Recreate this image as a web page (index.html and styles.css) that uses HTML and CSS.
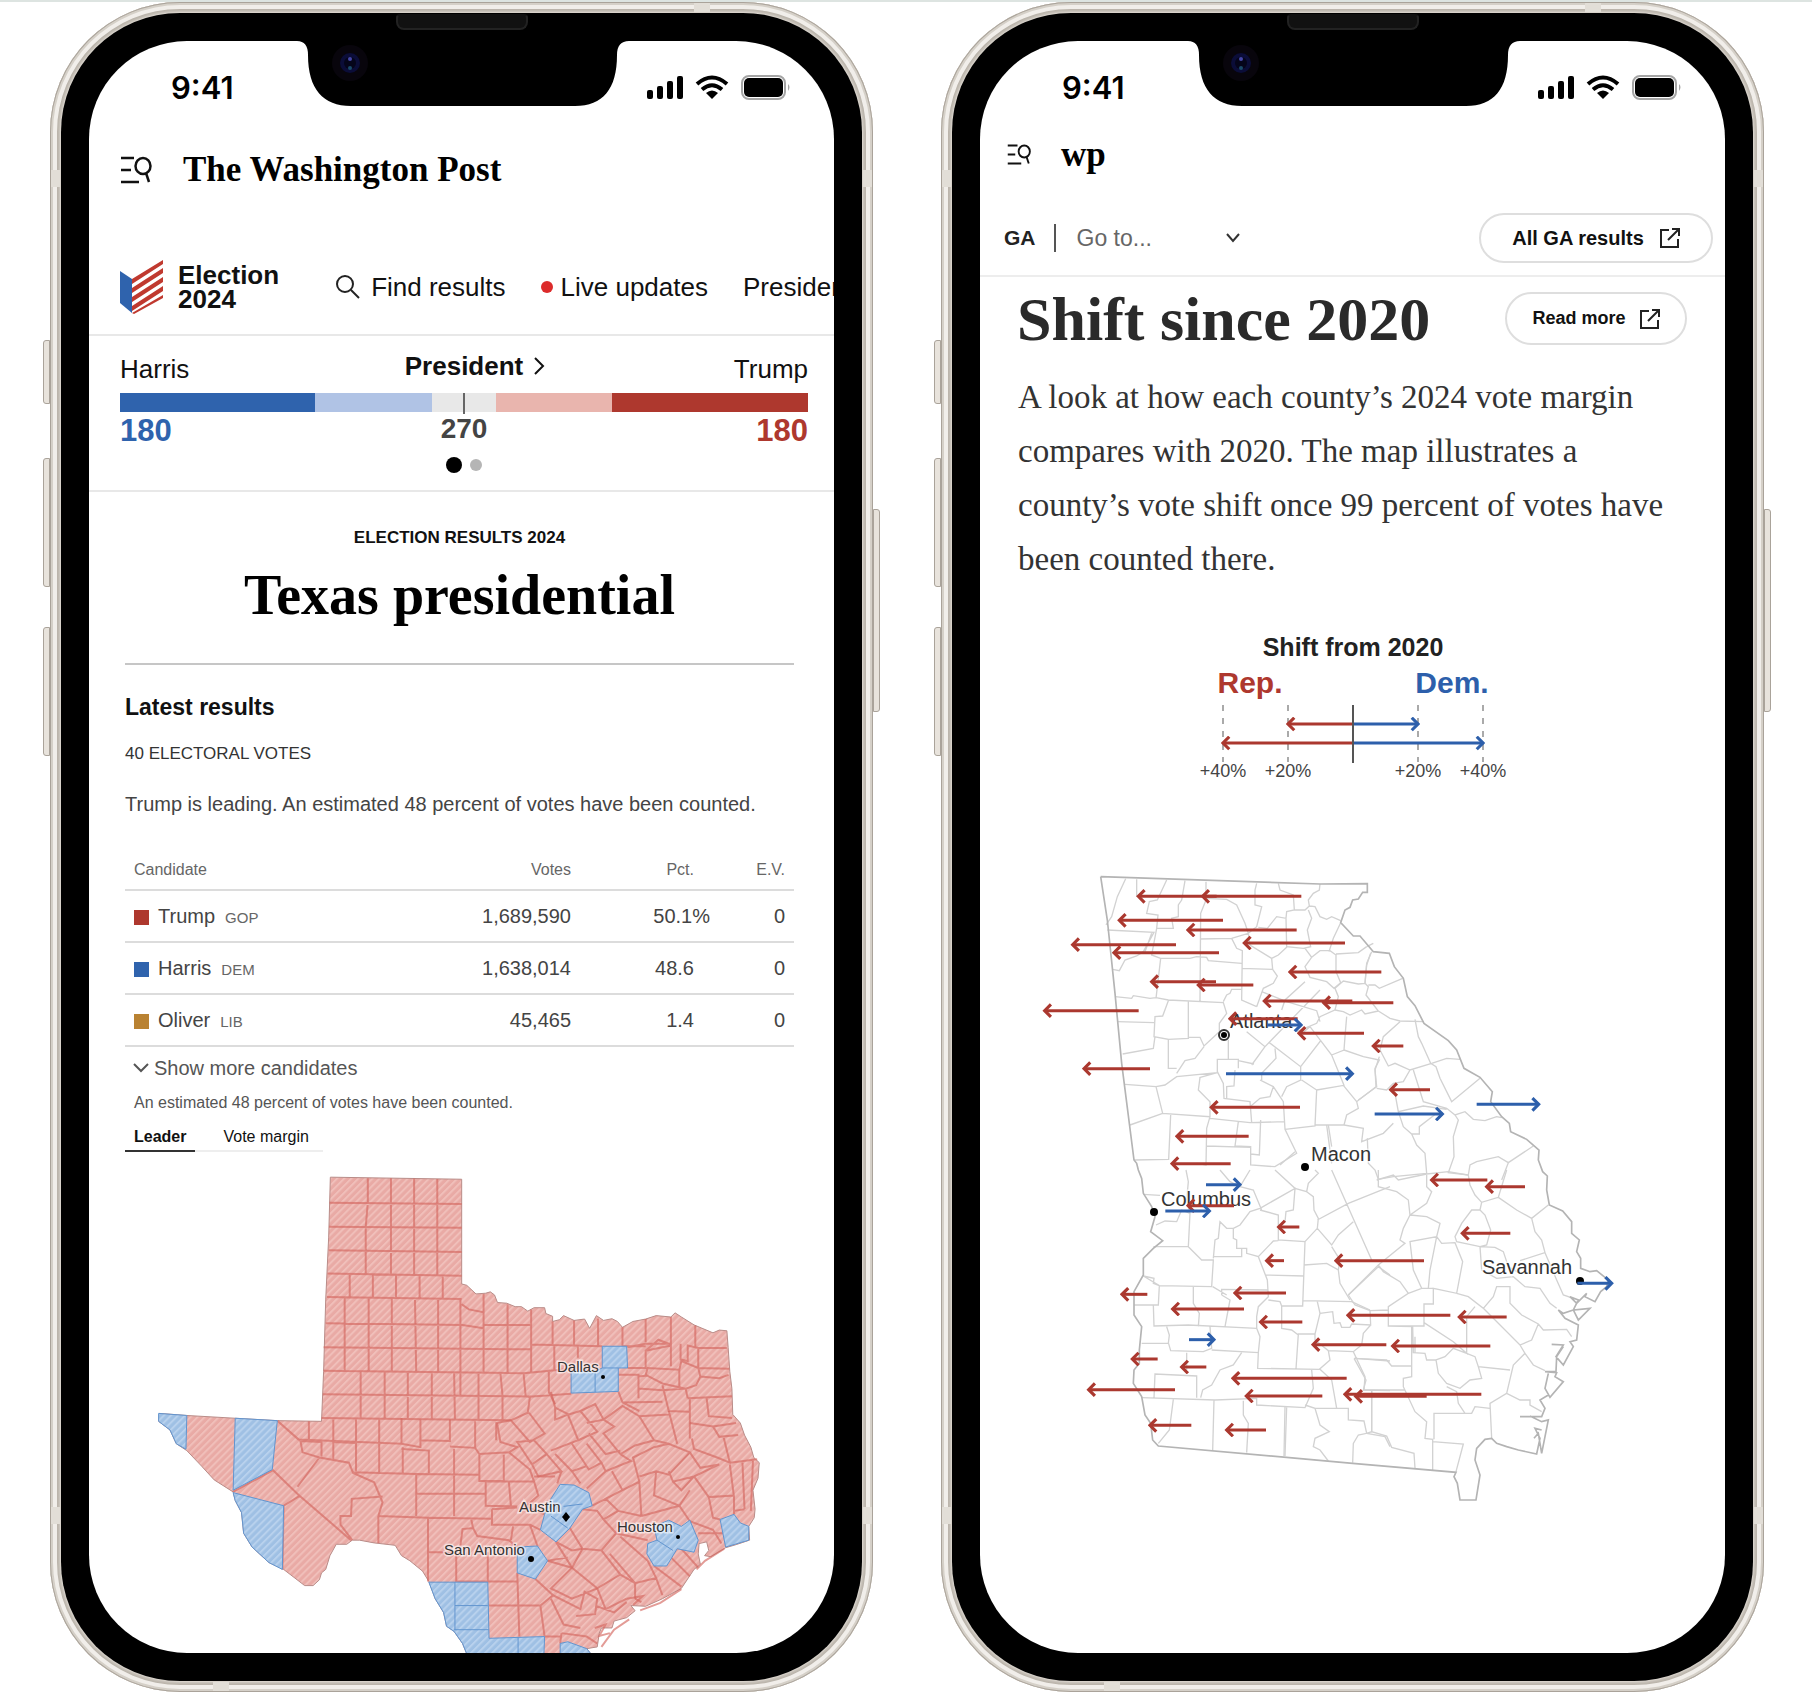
FILE: index.html
```html
<!DOCTYPE html>
<html lang="en">
<head>
<meta charset="utf-8">
<meta name="viewport" content="width=device-width, initial-scale=1">
<title>Election 2024 on mobile</title>
<link rel="stylesheet" href="styles.css">
</head>
<body>
<svg class="defs" aria-hidden="true">
  <defs>
    <symbol id="notch" viewBox="0 0 332 66">
      <path d="M0 0Q11 0 11 14C11 48 26 65 54 65H278C306 65 320 48 320 14Q320 0 332 0Z" fill="#000"/>
      <circle cx="53" cy="22" r="18" fill="#08050c"/>
      <circle cx="53" cy="22" r="10" fill="#0b0d38"/>
      <circle cx="53" cy="22" r="6" fill="#05051a"/>
      <circle cx="53" cy="18" r="2" fill="#4547a8"/>
      <circle cx="53" cy="27" r="2" fill="#1a4a68"/>
    </symbol>
    <symbol id="status" viewBox="0 0 144 26">
      <rect x="0" y="15" width="6" height="9" rx="2"/>
      <rect x="10" y="11" width="6" height="13" rx="2"/>
      <rect x="20" y="6" width="6" height="18" rx="2"/>
      <rect x="30" y="1" width="6" height="23" rx="2"/>
      <path d="M50 9Q65-4 80 9M55 14.500Q65 6 75 14.500" fill="none" stroke="#000" stroke-width="4"/>
      <path d="M59 18Q65 13 71 18L65 24Z"/>
      <rect x="95" y="1" width="43" height="23" rx="7" fill="none" stroke="#a5a5a5" stroke-width="2"/>
      <rect x="97" y="3" width="39" height="19" rx="5"/>
      <path d="M141 9q3 3 0 7z" fill="#a5a5a5"/>
    </symbol>
    <symbol id="menu" viewBox="0 0 32 28">
      <g fill="none" stroke="#111" stroke-width="2.500">
        <path d="M1 2H14M1 14H11M1 26H19"/>
        <ellipse cx="23" cy="10" rx="7.500" ry="8"/>
        <path d="M26 17L29 26"/>
      </g>
    </symbol>
    <symbol id="external" viewBox="0 0 20 20">
      <path d="M9 2H1V19H18V11M12 1H19V8M19 1L8 12" fill="none" stroke="#222" stroke-width="2"/>
    </symbol>
    <pattern id="hatch-red" width="5" height="5" patternUnits="userSpaceOnUse" patternTransform="scale(2.376 2.904) rotate(45)">
      <rect width="5" height="5" fill="#e9aaa5"/><rect width="2" height="5" fill="#f0bfba"/>
    </pattern>
    <pattern id="hatch-blue" width="5" height="5" patternUnits="userSpaceOnUse" patternTransform="scale(2.376 2.904) rotate(45)">
      <rect width="5" height="5" fill="#9fc0e4"/><rect width="2" height="5" fill="#b8d1ed"/>
    </pattern>
    <marker id="head-red" viewBox="0 0 8 12" refX="7" refY="6" markerWidth="4" markerHeight="5" orient="auto">
      <path d="M2 1L7 6L2 11" fill="none" stroke="#ab382f" stroke-width="2.500"/>
    </marker>
    <marker id="head-blue" viewBox="0 0 8 12" refX="7" refY="6" markerWidth="4" markerHeight="5" orient="auto">
      <path d="M2 1L7 6L2 11" fill="none" stroke="#2d5fab" stroke-width="2.500"/>
    </marker>
  </defs>
</svg>

<div class="stage">
  <section class="phone" aria-label="Texas results">
    <span class="key key-mute"></span><span class="key key-up"></span><span class="key key-down"></span><span class="key key-power"></span>
    <div class="bezel">
      <span class="band band-left"></span><span class="band band-right"></span><span class="band band-top"></span><span class="band band-bottom"></span><span class="band band-left low"></span><span class="band band-right low"></span>
      <span class="speaker"></span>
      <div class="screen">
        <svg class="notch" aria-hidden="true"><use href="#notch"/></svg>
        <div class="status"><span>9:41</span><svg class="status-icons" aria-hidden="true"><use href="#status"/></svg></div>
        <header class="masthead">
          <button class="icon-button" aria-label="Menu and search"><svg width="32" height="28"><use href="#menu"/></svg></button>
          <a class="wordmark" href="#home">The Washington Post</a>
        </header>
        <nav class="election-nav">
          <a class="brand" href="#election">
            <svg width="44" height="54" viewBox="0 0 44 54" aria-hidden="true">
              <path d="M0 11L12 19V53L0 43Z" fill="#2f63ad"/>
              <path d="M12 19L43 0V4L12 24ZM12 28L43 8V13L12 33ZM12 37L43 17V22L12 42ZM12 46L43 26V31L12 51ZM12 53L43 35V38L14 54Z" fill="#c0392f"/>
            </svg>
            <span>Election<br>2024</span>
          </a>
          <a class="nav-link find" href="#find">
            <svg width="25" height="25" viewBox="0 0 25 25" aria-hidden="true"><circle cx="10" cy="10" r="8" fill="none" stroke="#222" stroke-width="2"/><path d="M16 16L24 24" stroke="#222" stroke-width="2"/></svg>
            Find results</a>
          <a class="nav-link live" href="#live"><span class="live-dot"></span>Live updates</a>
          <a class="nav-link" href="#president">President</a>
        </nav>
        <section class="scoreboard">
          <div class="score-names">
            <span>Harris</span>
            <a class="race" href="#race">President<svg width="11" height="18" viewBox="0 0 11 18" aria-hidden="true"><path d="M1 1L9 9L1 17" fill="none" stroke="#111" stroke-width="2"/></svg></a>
            <span class="right">Trump</span>
          </div>
          <div class="score-bar">
            <span class="dem" style="flex-grow:195"></span><span class="dem-lean" style="flex-grow:117"></span><span class="open" style="flex-grow:64"></span><span class="gop-lean" style="flex-grow:116"></span><span class="gop" style="flex-grow:196"></span>
          </div>
          <div class="score-totals"><b class="dem-text">180</b><b class="goal">270</b><b class="gop-text right">180</b></div>
          <div class="pager"><span class="dot current"></span><span class="dot"></span></div>
        </section>
        <main class="results">
          <p class="eyebrow">ELECTION RESULTS 2024</p>
          <h1>Texas presidential</h1>
          <hr>
          <h2>Latest results</h2>
          <p class="electoral">40 ELECTORAL VOTES</p>
          <p class="summary">Trump is leading. An estimated 48 percent of votes have been counted.</p>
          <table>
            <thead><tr><th>Candidate</th><th class="num">Votes</th><th class="num pct">Pct.</th><th class="num ev">E.V.</th></tr></thead>
            <tbody>
              <tr><td><i class="swatch gop"></i>Trump<small>GOP</small></td><td class="num">1,689,590</td><td class="num pct lead">50.1%</td><td class="num ev">0</td></tr>
              <tr><td><i class="swatch dem"></i>Harris<small>DEM</small></td><td class="num">1,638,014</td><td class="num pct">48.6</td><td class="num ev">0</td></tr>
              <tr><td><i class="swatch lib"></i>Oliver<small>LIB</small></td><td class="num">45,465</td><td class="num pct">1.4</td><td class="num ev">0</td></tr>
            </tbody>
          </table>
          <button class="more"><svg width="16" height="10" viewBox="0 0 16 10" aria-hidden="true"><path d="M1 1L8 8L15 1" fill="none" stroke="#555" stroke-width="2"/></svg>Show more candidates</button>
          <p class="note">An estimated 48 percent of votes have been counted.</p>
          <div class="tabs"><button class="tab selected">Leader</button><button class="tab">Vote margin</button></div>
          <svg class="texas" viewBox="-5 1 669 512" role="img" aria-label="Map of Texas counties">
            <g transform="scale(.42092 .34438)">
              <path class="red-area" d="M476 76L788 82V386L800 390L822 415L845 413L856 409L866 418L873 440L895 442L915 452L930 452L945 465L960 455L985 455L988 472L1004 480V495L1020 490L1030 478L1055 492L1080 488L1092 515L1108 478L1125 492L1145 487L1158 495L1170 512L1195 495L1225 488L1250 478L1285 482L1295 470L1310 482L1340 505L1385 528L1400 520L1418 522L1421 570L1425 640L1430 690L1432 765L1450 790L1460 825L1475 860L1482 890L1495 905L1492 950L1480 985L1485 1040L1483 1065L1470 1090L1472 1130L1440 1143L1415 1152L1380 1178L1365 1175L1375 1160L1370 1135L1352 1140L1350 1170L1355 1200L1340 1215L1310 1270L1265 1300L1225 1322L1190 1320L1200 1335L1180 1355L1150 1365L1145 1385L1120 1385L1115 1400L1110 1440L1085 1445L1105 1475H805L790 1430L770 1395L752 1380L745 1340L725 1300L710 1250L695 1220L665 1190L645 1175L630 1145L580 1138L545 1130H528L515 1142H490L475 1175L465 1215L455 1225L450 1245L435 1262H415L365 1215L330 1195L290 1150L270 1110L265 1050L250 1015L245 990L200 955L170 915L135 870L110 850L95 810L68 785L70 762L135 768L350 783L455 785L460 640L465 430L472 250Z"/>
              <path class="red-line" d="M474 150L788 154M473 220L788 223M472 288L788 293M469 356L788 362M468 424L788 430M465 500L790 505L840 515M460 570L953 576M460 638L935 645L1048 632M458 706L955 713L1048 705M455 775L905 782M565 79V150L560 220V356M620 79V356M675 80V358M730 81V360M522 358V424M577 360V426M632 362V426M688 362V427M743 362V429M510 426V638M567 428V640M622 428V640M677 428L680 643M732 430V643M785 430V710M840 415V643M897 445V643M953 460V643M840 505H953M788 445L805 460L840 468M548 640V777M605 642V778M660 642V778M717 642V780M770 644L772 780M828 645V780M880 645L885 710V780M935 645L940 712L950 715L945 760L905 782M1004 495V565M1055 492V565M1112 487V567M1170 512V567H1225M1225 488V555M1285 482V560M1343 507V570M955 562L1122 567M1008 565V635M1064 567V600M995 635V700L1010 735M1182 570L1225 560L1285 560M1182 630H1225L1225 580L1255 548L1285 562V625M1225 580L1285 565M1308 560V605L1325 610V565L1350 572L1418 572M1350 572V630L1355 655L1345 680L1320 690L1265 675L1225 650L1230 630L1305 635L1310 610L1350 630L1424 632M1305 635V685M1160 650H1208V718M1208 655L1230 652M1208 690L1265 695L1320 690L1325 718M1265 680L1280 755L1328 757M1160 698L1170 730L1210 755M1325 718L1430 712M1330 718V835M1370 718L1375 770L1430 775M1170 730L1265 728M1355 655L1400 660L1422 650"/>
              <path class="red-line" d="M905 782L950 845L985 820L948 760M905 782L870 790V840M1010 745L1042 765L1010 780ZM1000 700L1010 745M1040 765L1065 840L1000 870M1042 765L1070 755L1110 815L1065 840M1070 755L1105 735L1125 780L1085 790M1125 780L1170 740L1210 770L1245 840L1200 855L1165 880L1125 820L1150 800L1125 780M1050 850L1090 925L1120 905L1085 850M1090 820L1130 880L1165 870M920 845L955 910L990 880L960 840ZM955 910L970 945L1025 930L990 880M1025 930L1015 965M1010 880L1050 930L1085 915M1050 930L1070 965M1120 905L1130 930L1190 900L1165 880M1130 930L1085 980M1145 930L1170 985L1210 960L1195 890L1245 860L1280 850L1330 875L1280 940L1250 930L1210 945M1210 770L1280 765M1280 755L1300 850M1245 840L1280 850M1330 790L1385 800L1400 830L1445 825M1335 835L1340 865L1395 890L1425 905L1410 830M1385 800L1440 790M1425 905L1490 895M1330 875L1355 920L1400 910M1455 905L1460 1040M1480 900L1475 1045M1425 910L1435 1005M1400 910L1340 945L1290 960L1280 930M1340 945L1375 1005L1435 1000M1340 945L1310 985L1290 960M1210 960L1215 1060M1250 930L1245 1000L1305 1030L1330 985M1215 1060L1305 1030L1330 1075M1170 985L1130 1010L1160 1045L1215 1060M1130 1010L1098 1030M1160 1045L1125 1070L1110 1045L1075 1040M1125 1070L1155 1110L1230 1130M1155 1110L1120 1160L1075 1155L1045 1095M1075 1155L1050 1210L992 1190M1120 1160L1165 1230L1110 1270L1050 1210M1165 1120L1230 1190L1250 1240L1200 1255L1140 1170M1200 1255V1300M1165 1230L1200 1255M1250 1240L1265 1290M1245 1205L1310 1265M1285 1180L1330 1235M1310 1155L1350 1210M1375 1005L1385 1065L1402 1070M1435 1005V1055M1330 1075L1385 1100L1405 1140M1350 1110H1410M1460 1040L1435 1045"/>
              <path class="red-line" d="M350 783L405 842L410 875L450 890L520 905L530 935L580 962L600 1020L590 1060M405 842L455 845V887M450 890L398 975M338 925L400 998L525 1130M405 1000L365 1030L362 1215M245 990L338 928M350 783L400 838L645 850V775M425 785V838M483 780V895M537 780V930M592 780V935M485 845L537 848M645 850L690 860V840L760 842V780M648 860V935M690 780V840M645 865L710 870V935M770 865V1060M530 933L680 938L830 940M760 858L820 862L830 880L900 875L950 925L960 960H845V1030L920 1032M820 785V862M872 790L880 845L920 860L900 875M830 880V958H888V882M680 938V1060M680 995H845M900 960L905 1030M500 1085V1060H525L527 1010L600 1003M500 1085L528 1130M590 1060V1138M590 1060L708 1065L860 1068M708 1065V1250M708 1165H775V1250H920M785 1145L790 1098L815 1095L825 1118L900 1130L920 1150M810 1065L815 1095M860 1040V1085H950L968 1147M910 1090L905 1130M850 1165V1250M960 960L970 1000L940 1032L985 1055M860 1040L920 1035M950 1085L975 1100M960 945H1010M920 1225L925 1410M853 1320H975L1005 1290L963 1243M975 1320L985 1410M1012 1135L1050 1210L1000 1270L1050 1300L1110 1270M1000 1300L1030 1375L1070 1385M1005 1290L1070 1330L1080 1280L1110 1300L1105 1345L1060 1350M1105 1320L1150 1340L1180 1310M1025 1400L1085 1410L1110 1430M1025 1400L1022 1430M985 1410H1022M1012 1135L1050 1160L1075 1155M992 1190L1040 1180M1110 1270L1130 1330L1180 1300M1200 1300L1215 1310"/>
              <path class="red-line coast" d="M1212 1334L1260 1312L1310 1272M1120 1440L1150 1390L1186 1360M1104 1385L1130 1375L1115 1408L1140 1400M1180 1300L1218 1292L1195 1318M1346 1215L1366 1190L1412 1155"/>
              <path class="blue-area" d="M68 762L135 768L133 866L110 850L95 810L68 785ZM250 776L350 783L338 925L245 985ZM245 992L365 1030L362 1215L330 1195L290 1150L270 1110L265 1050L250 1015ZM1122 567H1180L1182 630H1160V698L1048 703V640H1105L1122 630ZM1105 640V700M1122 630H1160M1022 968L1055 970L1090 992L1098 1030L1075 1040L1045 1095L1012 1135L975 1100L985 1055L1000 1010ZM1000 1060L1040 1095M1030 1032L1075 1025M920 1150L968 1147L992 1190L963 1243L920 1225ZM1245 1090L1280 1072L1310 1090L1330 1072L1350 1130L1340 1165L1300 1155L1275 1205H1245L1228 1170L1230 1140L1252 1130ZM1252 1130L1290 1160M1402 1070L1435 1055L1450 1080L1470 1090V1130L1415 1150ZM710 1252H850L853 1415L985 1410L983 1475H805L790 1430L770 1395L752 1380L745 1340L725 1300ZM772 1252V1390M772 1320H850M770 1390H852M922 1412V1475M1022 1430L1040 1425L1085 1445L1105 1475H1022Z"/>
            </g>
            <g class="city"><text x="427" y="221">Dallas</text><text x="389" y="361">Austin</text><text x="314" y="404">San Antonio</text><text x="487" y="381">Houston</text></g>
            <circle cx="473" cy="226" r="2"/><path d="M436 361L440 366L436 371L432 366Z"/><circle cx="401" cy="408" r="3"/><circle cx="548" cy="386" r="2"/>
          </svg>
        </main>
      </div>
    </div>
  </section>

  <section class="phone" aria-label="Georgia shift">
    <span class="key key-mute"></span><span class="key key-up"></span><span class="key key-down"></span><span class="key key-power"></span>
    <div class="bezel">
      <span class="band band-left"></span><span class="band band-right"></span><span class="band band-top"></span><span class="band band-bottom"></span><span class="band band-left low"></span><span class="band band-right low"></span>
      <span class="speaker"></span>
      <div class="screen">
        <svg class="notch" aria-hidden="true"><use href="#notch"/></svg>
        <div class="status"><span>9:41</span><svg class="status-icons" aria-hidden="true"><use href="#status"/></svg></div>
        <header class="masthead compact">
          <button class="icon-button" aria-label="Menu and search"><svg width="24" height="21"><use href="#menu"/></svg></button>
          <a class="wordmark" href="#home">wp</a>
        </header>
        <div class="jump">
          <b>GA</b>
          <label class="goto"><select aria-label="Go to section"><option>Go to...</option></select><svg width="16" height="10" viewBox="0 0 16 10" aria-hidden="true"><path d="M2 1L8 8L14 1" fill="none" stroke="#333" stroke-width="2"/></svg></label>
          <button class="pill">All GA results<svg width="20" height="20" aria-hidden="true"><use href="#external"/></svg></button>
        </div>
        <main>
          <div class="shift-head">
            <h1>Shift since 2020</h1>
            <button class="pill small">Read more<svg width="20" height="20" aria-hidden="true"><use href="#external"/></svg></button>
          </div>
          <p class="intro">A look at how each county’s 2024 vote margin compares with 2020. The map illustrates a county’s vote shift once 99 percent of votes have been counted there.</p>
          <svg class="legend" viewBox="0 0 310 160" role="img" aria-label="Shift from 2020 key">
            <text class="legend-title" x="155" y="26">Shift from 2020</text>
            <text class="legend-party rep" x="52" y="63">Rep.</text><text class="legend-party democrat" x="254" y="63">Dem.</text>
            <path d="M25 75V132M90 75V132M220 75V132M285 75V132" stroke="#aaa" stroke-width="2" stroke-dasharray="6 7"/>
            <g stroke-width="3"><g class="red-arrows"><path d="M155 94H90"/><path d="M155 113H25"/></g><g class="blue-arrows"><path d="M155 94H220"/><path d="M155 113H285"/></g></g>
            <path d="M155 75V133" stroke="#555" stroke-width="2"/>
            <g class="legend-scale"><text x="25" y="147">+40%</text><text x="90" y="147">+20%</text><text x="220" y="147">+20%</text><text x="285" y="147">+40%</text></g>
          </svg>
          <svg class="georgia" viewBox="-50 0 745 670" role="img" aria-label="Map of vote shift in Georgia counties">
            <g transform="scale(.33333)">
              <g class="county">
                <path d="M287 86L262 140L245 200L228 225M320 88V140M410 90L382 150L358 155L350 190L384 195L380 235L365 315L392 325L378 445M465 92L455 150L445 165L445 200L425 205L430 235L380 235M528 95V150L512 190L510 455M528 145L590 148L620 165L645 220L655 250L605 265L510 267M232 240L372 247L340 305L320 318L285 330L268 362L248 358M365 250L345 305M392 325L480 325L500 320L530 322L535 332L635 340M605 265L620 295L637 302L635 450L680 470M635 355L728 358L725 325L660 285L655 250L680 230L695 170L675 165V120L680 100M745 100L750 120L790 135L793 180L770 185L768 205L740 200L712 235L685 232M870 102L868 120L850 130L835 150L838 168L825 180L793 180M838 168L855 170L870 200L890 208L905 200L932 212M835 180L845 205L832 240L842 290L820 295L770 290L768 205M725 325L745 315L770 292M825 295L845 322L825 350L840 382L890 395L912 415L932 398L918 365V315L900 302H870L845 322M932 218L910 265L897 305M918 312L985 308L1010 290M1025 305L1010 340L1005 400L985 402L940 393L915 415L925 440L915 480M1005 400L1015 410L1008 435L1045 483L1005 492L995 480L960 495L940 485L915 480L870 500L860 520L800 545M1015 405L1035 405L1048 415L1118 385M1045 483L1080 505L1110 513L1182 515M728 358L742 378L730 400L700 415L680 470M255 440L305 445L310 437L360 445L378 443L415 450L580 458L590 490L568 520V558M580 455L590 435L600 430L605 418H635M415 452L398 498L375 500L372 560L415 568V655H440M475 452V565L415 568M475 562H510L522 588L568 545M262 515L372 518M278 612L370 595L375 560M440 670L465 632L495 625L522 590M695 425L770 455L860 482L870 515M825 395L765 450L755 480M650 545L705 590L870 420M705 590L665 645M718 578L812 650L872 572L840 530L810 555M595 570V628H562V668L440 680L405 705L378 710L285 703M562 628H625V655M625 632L672 642M562 665L580 700L582 745L660 755L665 818M510 683L505 720L540 755L540 800L398 790L378 710M508 683L562 668M398 790L300 825M422 795L416 928L312 930M540 800L530 835L528 945L500 940M540 805L660 818L765 815M590 745V710L612 708L615 660M690 690L700 695L730 710L720 740L690 745L660 770M735 595L738 625L695 670V690M625 815L615 888L662 890V945L735 950L800 910L765 838L760 755L750 740L730 710M755 740L770 710L812 690V650M815 690L860 720L855 828L765 838M860 720L942 706L905 615L872 572M905 615L942 600L945 560L950 500M942 600L1000 620L1048 630L1035 655L1038 710L980 755L940 706M980 755L985 775L950 795L942 825L855 825M942 825L1000 835L995 875L1060 850L1090 820M692 810L688 915L662 912M530 888L662 892M895 825L905 890"/>
              </g>
              <g class="county" transform="translate(750)">
                <path d="M260 290L280 280M272 310L260 345L255 400M360 515L310 560L300 600L325 648L345 640L390 660L455 640L500 625L540 628M405 508L415 560L425 580L452 640L468 650L480 685L515 755L600 685M298 620L285 660L290 710L235 750M390 660L370 695L340 700L320 720L290 715M400 660L430 755L500 775L525 795L555 785L580 808L615 812L650 800L665 803M345 730L355 785L430 768L500 778M355 785L370 830L395 852H418V830L470 790M525 795L535 810L520 860L522 920L505 968L565 975L570 945L590 935L655 920L685 938L760 888M395 852L410 885L435 910L440 970L340 980L295 988L285 960L265 940L262 865M140 825L155 940M685 938L665 990M45 905L0 945"/>
              </g>
              <g class="county" transform="translate(0 960)">
                <path d="M340 73L390 76M378 165L405 153L440 155L455 120L480 130M468 0L475 35L470 90L480 130L475 230M370 230H475L515 270H550L545 350L388 347L340 318L372 325L370 340L388 347L385 405H312M548 350L590 375M552 260H635V235H650V250L685 260L712 330L715 380L685 410L680 440L680 475L475 465L372 468L370 405M550 265L555 210L565 205L570 155L590 175H610V205L620 210V235H635M610 175L630 165L660 125L690 115L795 55L790 120L768 125L765 155M690 120L745 135V210L825 215L818 408L755 408L750 395L715 390M695 120L670 60L630 50L600 35L570 0M630 50L660 0M735 0L795 55L830 65L835 40L865 10L855 0M830 65L850 80L852 120L865 145L862 175L825 215M745 212L730 213L685 260M705 315L822 318M822 285L890 280L925 300L930 340L960 390M818 392L965 395L1020 420M862 175L905 225L925 195L970 155M905 0L1025 270M862 150L955 100L1080 50M905 230L930 270L925 300M955 375L1045 290L1080 315M490 350V400L508 430L505 470M575 375V358L715 360M575 375L600 390L585 470M410 470L418 495L415 520L335 520M415 518L422 542L520 545L545 535L540 470M545 540L685 548L690 500L680 475M470 548V600M372 683L375 612L500 618V683M512 683L518 660L545 645L570 600L610 585L635 548M335 683L555 690L680 685V705L825 713L850 655L845 600M430 688L418 780L385 820M552 690L548 842M640 692V735L655 760L650 848M770 710L765 858M685 548L683 595L868 598L900 570L895 542L855 510V492H805L798 597M755 408V475L785 480L805 495M855 492L870 430L862 395M870 430L908 425L912 460L930 458L935 472H960L965 462L1022 465L1020 420M1022 465L1000 490L995 525L970 545L895 542M825 705L855 715L870 765L898 785L855 805L850 830L870 840L895 873M870 598L905 630L920 715L855 715M920 715H955V750L1002 753L1010 790L985 795L970 820L968 878M970 545L1005 620L1002 660L1080 662M975 565L1080 573M1025 662V785L1010 790L1065 800L1080 830"/>
              </g>
              <g class="county" transform="translate(750 960)">
                <path d="M295 0V50L350 65L385 90L390 135L440 100L455 65L440 50V15M290 30L340 15L355 30L440 12L505 5L565 15L570 45L585 75L605 97L655 82L680 0M605 97L600 120L575 120L545 160L525 200L530 215L600 230L620 225L632 180L615 135L600 120M655 82L710 120L755 145L805 105M755 145L765 185L785 210L795 248L720 272M390 135L370 175L360 210L375 220L295 285L205 375M390 135L440 140L480 160L470 200L390 215L400 300L425 355M470 200L485 220L525 218L548 275L530 370L460 355V402H432V468H325V410L385 370L360 335L310 305L295 285M385 370L425 355H460M470 200L450 300L445 355M205 375L225 405L270 422L325 420M530 370L565 380L610 415L640 380L650 350L690 350V400L725 435L775 462L790 480L860 478L875 500M600 230L605 300L650 325L700 320L735 350L780 355L810 400L830 415M600 230L645 232L670 245L685 290L720 310M795 248L830 330L850 375L880 385M775 462L755 510L720 525L610 415M432 458L520 515L560 550L560 440L585 410M720 525L735 550L700 585L680 670L630 700L635 805M735 550L760 585L795 602M560 550L585 560L595 590L690 600M595 590L605 625L570 630L540 655L500 640L475 610L468 570H440L435 550L400 548L398 470L325 468M468 570L495 560L520 535L560 550M395 470L395 620L370 625L370 650L405 725L440 755L435 805L458 808V900M222 565L320 570L335 588H395M222 565L258 630L250 660H375M500 650L530 665L535 700L555 730L575 730L585 710L630 715M555 730H462V808M458 815L550 822L528 905M275 662V785L320 798L335 832L402 850L405 895M680 670L720 690L750 690V705L785 725M15 710L12 858M405 550V500"/>
              </g>
              <path class="outline" d="M212 80L870 102L1012 101V127H998L985 147L968 150L960 172L945 180L932 218L970 258H990L1030 305L1078 310L1093 350L1120 385L1132 440L1155 467L1182 520L1255 572L1280 600L1302 655L1350 682L1387 725L1382 755L1415 800L1438 820L1442 845L1490 868L1527 900L1525 930L1538 965L1552 978L1550 1020L1558 1065L1598 1083L1625 1115V1150L1648 1170L1640 1205L1652 1225V1255L1680 1265L1700 1262L1735 1290L1730 1310L1712 1325L1695 1355L1665 1340L1670 1330L1640 1360L1620 1340L1645 1350L1630 1380L1680 1375L1645 1410L1630 1380L1600 1390L1585 1380L1605 1405L1645 1425L1640 1470L1620 1475L1630 1490L1600 1545L1578 1520L1600 1485L1565 1483M1600 1490L1580 1520L1578 1565H1545L1580 1568L1575 1580L1600 1595L1560 1642L1545 1615L1555 1570M1555 1635L1530 1650L1545 1675L1535 1700L1470 1700M1500 1698L1535 1715L1555 1710L1535 1810L1525 1750L1512 1765M1535 1740L1515 1735L1530 1765L1520 1812L1465 1800L1430 1790L1400 1780L1385 1765L1365 1768L1340 1795L1335 1830L1350 1875L1338 1950H1290L1282 1900L1272 1880L1278 1867L968 1840L385 1788L368 1770L362 1720L345 1695L335 1640L310 1600L312 1560L328 1540V1500L335 1430L312 1395V1325L340 1275V1225L370 1195L398 1172L362 1145L375 1100L365 1070L340 1030L335 985L325 960L320 940L312 930L275 640L255 430L232 210L212 80"/>
            </g>
            <g class="city large"><text x="200" y="178">Atlanta</text><text x="281" y="311">Macon</text><text x="131" y="356">Columbus</text><text x="452" y="424">Savannah</text></g>
            <circle cx="194" cy="185" r="5" fill="none" stroke="#333" stroke-width="2"/><circle cx="194" cy="185" r="3"/><circle cx="275" cy="317" r="4"/><circle cx="124" cy="362" r="4"/><circle cx="550" cy="431" r="4"/>
            <g transform="scale(.33333)" stroke-width="9">
              <g class="red-arrows">
                <path d="M560 139H325"/><path d="M814 139H518"/><path d="M579 211H268"/><path d="M800 240H474"/><path d="M438 284H128"/><path d="M567 308H252"/><path d="M945 279H643"/><path d="M1054 366H780"/><path d="M558 395H365"/><path d="M670 405H505"/><path d="M967 453H703"/><path d="M1090 458H881"/><path d="M326 482H44"/><path d="M803 506H600"/><path d="M1002 550H807"/><path d="M1120 588H1030"/><path d="M360 656H162"/><path d="M810 772H544"/><path d="M1200 719H1082"/><path d="M656 859H441"/><path d="M602 941H426"/><path d="M1372 990H1205"/><path d="M1485 1010H1370"/><path d="M1441 1150H1297"/><path d="M612 1067H474"/><path d="M808 1131H746"/><path d="M762 1232H710"/><path d="M1182 1232H918"/><path d="M768 1329H615"/><path d="M352 1333H276"/><path d="M642 1377H428"/><path d="M817 1416H692"/><path d="M1261 1396H954"/><path d="M1430 1401H1288"/><path d="M1069 1484H849"/><path d="M1381 1488H1088"/><path d="M383 1527H307"/><path d="M529 1551H455"/><path d="M950 1585H609"/><path d="M435 1619H176"/><path d="M877 1638H649"/><path d="M1354 1633H945"/><path d="M1190 1639H977"/><path d="M484 1726H360"/><path d="M708 1740H590"/>
              </g>
              <g class="blue-arrows">
                <path d="M712 525H813"/><path d="M588 671H967"/><path d="M1034 792H1237"/><path d="M1340 763H1526"/><path d="M528 1004H630"/><path d="M406 1083H538"/><path d="M477 1469H552"/><path d="M1642 1300H1745"/>
              </g>
            </g>
          </svg>
        </main>
      </div>
    </div>
  </section>
</div>
</body>
</html>
```
FILE: styles.css
```css
* { box-sizing: border-box; }
body { margin: 0; background: #fff; color: #111; font-family: "Liberation Sans", Arial, sans-serif; border-top: 2px solid #dde4e1; overflow-x: hidden; }
h1, h2, p { margin: 0; }
a { color: inherit; text-decoration: none; }
button { font: inherit; color: inherit; background: none; border: 0; padding: 0; cursor: pointer; }
svg { display: block; flex: none; }
.defs { position: absolute; width: 0; height: 0; }
.stage { display: grid; grid-template-columns: 1fr 1fr; gap: 68px; padding: 0 48px 0 50px; }

/* Phone body */
.phone { position: relative; aspect-ratio: 823 / 1690; min-width: 0; padding: 11px; border-radius: 130px; background: #e8e3dc; box-shadow: inset 0 0 0 1px #aaa39a, inset 0 0 0 3px #d5d0c8, inset 0 0 0 7px #f1eeea, inset 0 0 3px 10px #bab4ab; }
.bezel { height: 100%; padding: 28px; border-radius: 119px; background: #000; }
.screen { position: relative; height: 100%; overflow: hidden; border-radius: 98px; background: #fff; }
.key { position: absolute; left: -7px; width: 7px; border: 1px solid #aaa39a; border-radius: 3px 0 0 3px; background: #e8e3dc; }
.key-mute { top: 20%; height: 64px; }
.key-up { top: 27%; height: 129px; }
.key-down { top: 37%; height: 129px; }
.key-power { top: 30%; left: auto; right: -7px; height: 203px; border-radius: 0 3px 3px 0; }
.band { position: absolute; background: #e2ded7; }
.band-left { left: 1px; top: 168px; width: 9px; height: 17px; }
.band-right { right: 1px; top: 168px; width: 9px; height: 17px; }
.band.low { top: auto; bottom: 168px; }
.band-top { top: 1px; right: 163px; width: 16px; height: 9px; }
.band-bottom { bottom: 1px; left: 163px; width: 16px; height: 9px; }
.speaker { position: absolute; top: 12px; left: 50%; width: 132px; height: 16px; margin-left: -66px; border: 2px solid #222; border-top-color: #111; border-radius: 4px 4px 8px 8px; background: #111; }
.notch { position: absolute; top: 0; left: 50%; width: 332px; height: 66px; margin-left: -165px; }

.status { display: flex; align-items: center; justify-content: space-between; height: 93px; padding: 0 43px 0 82px; font: 600 31px/36px Inter, sans-serif; color: #000; }
.status-icons { width: 144px; height: 26px; }
.masthead { display: flex; align-items: center; gap: 31px; height: 71px; padding-left: 31px; }
.wordmark { font: bold 35px/40px "Liberation Serif", serif; color: #000; }
.compact { height: 41px; gap: 30px; padding-left: 27px; }

/* Election navigation */
.election-nav { display: flex; align-items: center; height: 131px; padding: 34px 0 0 31px; border-bottom: 2px solid #e8e8e8; overflow: hidden; white-space: nowrap; font-size: 26px; line-height: 32px; }
.brand { display: flex; align-items: center; gap: 14px; margin-right: 56px; font-weight: bold; line-height: 24px; }
.nav-link { display: flex; align-items: center; gap: 11px; margin-right: 35px; }
.live { gap: 8px; }
.live-dot { width: 12px; height: 12px; border-radius: 50%; background: #dc2b2b; }

/* National scoreboard */
.scoreboard { padding: 16px 26px 17px 31px; border-bottom: 2px solid #e8e8e8; font-size: 26px; }
.score-names, .score-totals { display: grid; grid-template-columns: 1fr auto 1fr; }
.score-names { line-height: 34px; margin-bottom: 7px; }
.race { display: flex; align-items: center; gap: 11px; height: 28px; margin-right: -22px; font-weight: bold; }
.right { text-align: right; }
.score-bar { position: relative; display: flex; height: 19px; }
.score-bar::after { content: ""; position: absolute; left: 50%; top: 0; width: 2px; height: 21px; margin-left: -1px; background: #666; }
.dem { background: #2f63ad; }
.dem-lean { background: #b0c3e5; }
.open { background: #e8e8e8; }
.gop-lean { background: #e9b5ae; }
.gop { background: #ae382e; }
.lib { background: #b98232; }
.score-totals { font-size: 31px; line-height: 37px; height: 36px; }
.goal { font-size: 28px; line-height: 34px; color: #444; }
.dem-text { color: #2f63ad; }
.gop-text { color: #ae382e; }
.pager { display: flex; align-items: center; justify-content: center; gap: 8px; height: 16px; margin-top: 9px; }
.dot { width: 12px; height: 12px; border-radius: 50%; background: #b5b5b5; }
.current { width: 16px; height: 16px; background: #000; }

/* Texas results */
.results { padding: 35px 40px 0 36px; }
.eyebrow { font-size: 17px; line-height: 22px; font-weight: bold; text-align: center; }
.results h1 { margin: 14px 0 36px; font: bold 56px/64px "Liberation Serif", serif; text-align: center; color: #000; }
hr { height: 2px; margin: 0; border: 0; background: #c6c6c6; }
.results h2 { margin-top: 28px; font-size: 23px; line-height: 28px; }
.electoral { margin-top: 21px; font-size: 17px; line-height: 24px; color: #333; }
.summary { margin: 24px 0 32px; font-size: 20px; line-height: 28px; color: #444; white-space: nowrap; }
table { width: 100%; border-collapse: collapse; table-layout: fixed; font-size: 20px; color: #444; }
tr { border-bottom: 2px solid #dcdcdc; }
th { height: 40px; padding: 0 0 0 9px; font-size: 16px; font-weight: normal; text-align: left; color: #666; }
td { height: 52px; padding: 0 0 0 9px; }
.num { width: 140px; padding: 0; text-align: right; }
.pct { width: 123px; }
.pct.lead { position: relative; left: 16px; }
.ev { width: 100px; padding-right: 9px; }
.swatch { display: inline-block; width: 15px; height: 15px; margin-right: 9px; vertical-align: -2px; }
small { margin-left: 10px; font-size: 15px; color: #666; }
.more { display: flex; align-items: center; gap: 5px; margin: 7px 0 0 8px; font-size: 20px; line-height: 28px; color: #555; }
.note { margin: 10px 0 10px 9px; font-size: 16px; line-height: 22px; color: #555; }
.tabs { display: flex; font-size: 16px; line-height: 26px; }
.tab { padding: 0 9px; border-bottom: 2px solid #eee; }
.tab + .tab { padding: 0 14px 0 28px; }
.selected { font-weight: bold; border-color: #333; }
.texas, .georgia { width: 100%; }
.red-area { fill: url(#hatch-red); stroke: #b98c88; stroke-width: 1; vector-effect: non-scaling-stroke; }
.red-line { fill: none; stroke: #d4675f; stroke-width: 2; stroke-opacity: .65; vector-effect: non-scaling-stroke; }
.blue-area { fill: url(#hatch-blue); stroke: #6295cf; stroke-width: 1; vector-effect: non-scaling-stroke; }
.city { font-size: 15px; fill: #333; stroke: #fff; stroke-opacity: .6; stroke-width: 3; paint-order: stroke; }
.large { font-size: 20px; }

/* Georgia shift */
.jump { display: flex; align-items: center; height: 102px; padding: 26px 12px 0 24px; border-bottom: 2px solid #ededed; font-size: 21px; color: #222; }
.goto { display: flex; align-items: center; margin-left: 18px; padding-left: 21px; border-left: 2px solid #555; height: 28px; }
.goto select { appearance: none; width: 148px; padding: 0; border: 0; background: none; font: 23px/28px "Liberation Sans", Arial, sans-serif; color: #666; }
.pill { display: flex; align-items: center; justify-content: center; gap: 16px; width: 234px; height: 50px; margin-left: auto; border: 2px solid #dedede; border-radius: 27px; font-size: 20px; font-weight: bold; color: #111; }
.small { width: 182px; height: 53px; gap: 14px; font-size: 18px; }
.shift-head { display: flex; align-items: center; padding: 15px 38px 0 37px; }
.shift-head h1 { font: bold 62px/50px "Liberation Serif", serif; color: #2a2a2a; }
.intro { margin: 25px 37px 44px 38px; font: 33px/54px "Liberation Serif", serif; color: #333; }
.legend { width: 310px; height: 160px; margin: 0 auto 60px; }
.legend text { text-anchor: middle; }
.legend-title { font-size: 25px; font-weight: bold; fill: #222; }
.legend-party { font-size: 30px; font-weight: bold; }
.rep { fill: #ae382e; }
.democrat { fill: #2d5fab; }
.legend-scale { font-size: 18px; fill: #444; }
.red-arrows { stroke: #ab382f; fill: none; }
.blue-arrows { stroke: #2d5fab; fill: none; }
.red-arrows path { marker-end: url(#head-red); }
.blue-arrows path { marker-end: url(#head-blue); }
.county { fill: none; stroke: #d2d2d2; stroke-width: 4; }
.outline { fill: none; stroke: #b4b4b4; stroke-width: 5; }
```
